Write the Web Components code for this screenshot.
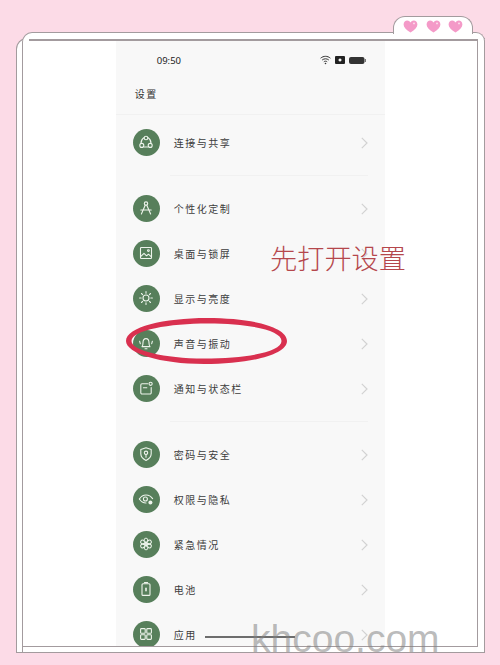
<!DOCTYPE html>
<html lang="zh">
<head>
<meta charset="utf-8">
<title>设置</title>
<style>
  html, body { margin: 0; height: 665px; overflow: hidden; background: #fcdbe7; }
</style>
</head>
<body>
<note-frame>
  <phone-screen>
    <status-bar time="09:50"></status-bar>
    <settings-header>设置</settings-header>
    <setting-row icon="share">连接与共享</setting-row>
    <row-divider></row-divider>
    <setting-row icon="compass">个性化定制</setting-row>
    <setting-row icon="picture">桌面与锁屏</setting-row>
    <setting-row icon="sun">显示与亮度</setting-row>
    <setting-row icon="bell">声音与振动</setting-row>
    <setting-row icon="notice">通知与状态栏</setting-row>
    <row-divider></row-divider>
    <setting-row icon="shield">密码与安全</setting-row>
    <setting-row icon="eye">权限与隐私</setting-row>
    <setting-row icon="flower">紧急情况</setting-row>
    <setting-row icon="battery">电池</setting-row>
    <setting-row icon="grid">应用</setting-row>
  </phone-screen>
</note-frame>
<script>
'use strict';

const petals = [0, 60, 120, 180, 240, 300]
  .map((deg) => `<ellipse cx="9" cy="5.6" rx="2" ry="2.5" transform="rotate(${deg} 9 9)"/>`)
  .join('');

const ICONS = {
  share: '<circle cx="9" cy="5" r="1.8"/><circle cx="4.8" cy="12.4" r="2"/><circle cx="13.2" cy="12.4" r="2"/><path d="M6.8 4.800C5 6 4 8 4 10.200M11.200 4.800C13 6 14 8 14 10.200M7.400 14h3.200"/>',
  compass: '<circle cx="9" cy="4.600" r="1.700"/><path d="M8.200 6.200 4.400 15M9.800 6.200 13.600 15M3.800 11h10.400"/>',
  picture: '<rect x="3.500" y="3.500" width="11" height="11" rx=".8"/><path d="m3.800 12.400 3.200-3 2.600 2.400 1.800-1.600 2.800 2.400"/><circle cx="11.400" cy="6.600" r=".9"/>',
  sun: '<circle cx="9" cy="9" r="3"/><path d="M9 2.600v1.600M9 13.800v1.600M2.600 9h1.600M13.800 9h1.600M4.500 4.500l1.100 1.100M12.400 12.400l1.100 1.100M4.500 13.500l1.100-1.100M12.400 5.600l1.100-1.100"/>',
  bell: '<path d="M5 12.600c1-.9 1-2 1-3.800C6 6.600 7.200 4.600 9 4.600s3 2 3 4.200c0 1.800 0 2.900 1 3.800zM8 14.800h2"/><path d="M2.600 7.200l.7 2.400M15.400 7.200l-.7 2.400"/>',
  notice: '<path d="M10.600 4.800H5A1.200 1.200 0 0 0 3.800 6v7.800A1.200 1.200 0 0 0 5 15h8a1.200 1.200 0 0 0 1.200-1.200V8.600"/><path d="M6.400 8.800h3.400"/><circle cx="13.600" cy="4.800" r="1.600"/>',
  shield: '<path d="M9 2.800 14.200 4.600v4.200c0 3-2.200 5.200-5.200 6.600-3-1.400-5.200-3.600-5.200-6.600V4.600z"/><circle cx="9" cy="7.800" r="1.700"/><path d="M9 9.500v2.800"/>',
  eye: '<path d="M2.400 9C4 6.400 6.300 5 9 5c2.700 0 5 1.300 6.600 3.600"/><path d="M2.400 9c1.600 2.600 3.900 4 6.600 4"/><circle cx="8.400" cy="9" r="2"/><circle cx="13.400" cy="12.400" r="2" fill="#eef4ec" stroke="none"/>',
  flower: `<g stroke-width=".95">${petals}</g><circle cx="9" cy="9" r="1.300"/>`,
  battery: '<rect x="5" y="3.800" width="8" height="11.600" rx="1"/><path d="M7.400 2.600h3.200"/><path d="M9 8.400v2.400" stroke-width="1.600"/>',
  grid: '<rect x="3.600" y="3.600" width="4.600" height="4.600" rx=".8"/><rect x="9.800" y="3.600" width="4.600" height="4.600" rx=".8"/><rect x="3.600" y="9.800" width="4.600" height="4.600" rx=".8"/><rect x="9.800" y="9.800" width="4.600" height="4.600" rx=".8"/>',
};

const CJK = '"Noto Sans CJK SC", "Noto Sans", sans-serif';

customElements.define(
  'note-frame',
  class NoteFrame extends HTMLElement {
    constructor() {
      super();
      this.attachShadow({ mode: 'open' }).innerHTML = `
      <style>
      :host {
        display: block;
        box-sizing: border-box;
        position: relative;
        height: 665px;
        padding: 38px 15px 12px 16px;
        --line: #a39b9e;
      }
      .back {
        box-sizing: border-box;
        height: 100%;
        background: #fff;
        border: 1.500px solid var(--line);
        border-right: 0;
        border-top-left-radius: 11px;
        padding-left: 4.500px;
        display: flex;
        flex-direction: column;
      }
      .front {
        flex: 1;
        min-height: 0;
        margin-top: -7.500px;
        background: #fff;
        border: 1.500px solid var(--line);
        border-bottom: 0;
        border-radius: 10px 9px 0 0;
        padding: 6.500px 6px 5px 0;
        display: flex;
        flex-direction: column;
      }
      .rule {
        flex: none;
        height: 2px;
        margin-left: 6px;
        background: var(--line);
      }
      .inner {
        flex: 1;
        min-height: 0;
        display: flex;
        justify-content: center;
        border-right: 1.500px solid var(--line);
        border-bottom: 1.500px solid var(--line);
        padding-left: 1px;
        overflow: hidden;
      }
      .tab {
        position: absolute;
        left: 393px;
        top: 16px;
        width: 80px;
        height: 17.500px;
        box-sizing: border-box;
        background: #fff;
        border: 1.500px solid var(--line);
        border-bottom: 0;
        border-radius: 12px 12px 0 0;
        display: flex;
        justify-content: space-between;
        padding: 3px 9px 0 9px;
      }
      .tab svg { width: 15px; height: 13px; }
      .hint {
        position: absolute;
        left: 270px;
        top: 237px;
        font: 300 27.200px/40px ${CJK};
        color: #b5474c;
      }
      .ring {
        position: absolute;
        left: 124px;
        top: 315px;
      }
      .mark {
        position: absolute;
        left: 251px;
        top: 613.500px;
        font: 39px/50px "Liberation Sans", sans-serif;
        color: rgba(130, 130, 130, .55);
      }
      </style>
      <div class="back">
        <div class="front">
          <div class="rule"></div>
          <div class="inner"><slot></slot></div>
        </div>
      </div>
      <div class="tab">
        ${'<svg viewBox="0 0 15 13"><path fill="#f49ac8" d="M7.500 12.600C3 9.600.6 7.400.6 4.400.6 2 2.400.6 4.200.6c1.400 0 2.600.7 3.300 2 .7-1.300 1.900-2 3.300-2 1.800 0 3.600 1.400 3.600 3.800 0 3-2.400 5.200-6.900 8.200z"/><circle cx="11" cy="3.400" r=".9" fill="#fde3ef"/></svg>'.repeat(3)}
      </div>
      <div class="hint">先打开设置</div>
      <svg class="ring" width="166" height="52" viewBox="0 0 166 52">
        <path fill="#d9304f" fill-rule="evenodd" d="M83 3C128 3 163 12 163 26 163 40 125 49 80 49 36 49 2 38 2 26 2 12 40 3 83 3ZM84 8.500C45 8.500 8 15 7.500 26 7.500 35.500 40 43.500 80 43.500 122 43.500 157.500 37 157.500 26 157.500 15 124 8.500 84 8.500Z"/>
      </svg>
      <div class="mark">khcoo.com</div>
      `;
    }
  }
);

customElements.define(
  'phone-screen',
  class PhoneScreen extends HTMLElement {
    constructor() {
      super();
      this.attachShadow({ mode: 'open' }).innerHTML = `
      <style>
      :host {
        display: block;
        position: relative;
        width: 269px;
        height: 100%;
        background: #f8f8f8;
        overflow: hidden;
      }
      .home {
        position: absolute;
        left: 89px;
        bottom: 8px;
        width: 90px;
        height: 2px;
        background: #6d6d6d;
      }
      </style>
      <slot></slot>
      <div class="home"></div>
      `;
    }
  }
);

customElements.define(
  'status-bar',
  class StatusBar extends HTMLElement {
    constructor() {
      super();
      this.attachShadow({ mode: 'open' }).innerHTML = `
      <style>
      :host {
        display: flex;
        align-items: center;
        justify-content: space-between;
        height: 38px;
        padding: 0 19px 0 41px;
        font: 9.500px "Noto Sans", sans-serif;
        color: #222;
      }
      .icons { display: flex; align-items: center; gap: 4px; }
      </style>
      <span class="time"></span>
      <span class="icons">
        <svg width="11" height="10" viewBox="0 0 11 10" fill="none" stroke="#333" stroke-width="1">
          <path d="M.6 3.200C3.500.7 7.500.7 10.400 3.200M2.200 5C4.200 3.400 6.800 3.400 8.800 5M3.800 6.800C4.800 6 6.200 6 7.200 6.800"/>
          <circle cx="5.500" cy="8.500" r=".8" fill="#333" stroke="none"/>
        </svg>
        <svg width="10" height="8" viewBox="0 0 10 8"><path fill="#222" fill-rule="evenodd" d="M1 0h8a1 1 0 0 1 1 1v6a1 1 0 0 1-1 1H1a1 1 0 0 1-1-1V1a1 1 0 0 1 1-1ZM5 2.500a1.500 1.500 0 1 0 .01 0Z"/></svg>
        <svg width="17" height="7" viewBox="0 0 17 7"><rect width="15.500" height="7" rx="2" fill="#333"/><rect x="15.800" y="2" width="1.200" height="3" fill="#777"/></svg>
      </span>
      `;
      this.shadowRoot.querySelector('.time').textContent = this.getAttribute('time');
    }
  }
);

customElements.define(
  'settings-header',
  class SettingsHeader extends HTMLElement {
    constructor() {
      super();
      this.attachShadow({ mode: 'open' }).innerHTML = `
      <style>
      :host {
        display: block;
        height: 34.500px;
        padding-left: 19px;
        border-bottom: 1px solid #f1f1f1;
        margin-bottom: 5px;
        font: 10px/30px ${CJK};
        letter-spacing: 1.500px;
        color: #333;
      }
      </style>
      <slot></slot>
      `;
    }
  }
);

customElements.define(
  'setting-row',
  class SettingRow extends HTMLElement {
    constructor() {
      super();
      this.attachShadow({ mode: 'open' }).innerHTML = `
      <style>
      :host {
        display: flex;
        align-items: center;
        height: 45px;
        padding: 0 17px;
        font: 10px ${CJK};
        letter-spacing: 1.500px;
        color: #3c3c3c;
      }
      .badge {
        flex: none;
        width: 27px;
        height: 27px;
        border-radius: 50%;
        background: #577f5b;
        display: flex;
        align-items: center;
        justify-content: center;
        margin-right: 14px;
      }
      .badge svg {
        width: 18px;
        height: 18px;
        fill: none;
        stroke: #eef4ec;
        stroke-width: 1.100;
        stroke-linecap: round;
        stroke-linejoin: round;
      }
      .label { flex: 1; }
      .chevron { width: 7px; height: 12px; margin-top: 2px; fill: none; stroke: #d2d2d2; stroke-width: 1.200; }
      </style>
      <span class="badge"><svg viewBox="0 0 18 18"></svg></span>
      <span class="label"><slot></slot></span>
      <svg class="chevron" viewBox="0 0 7 12"><path d="M.8.8 6 6 .8 11.200"/></svg>
      `;
      this.shadowRoot.querySelector('.badge svg').innerHTML = ICONS[this.getAttribute('icon')] || '';
    }
  }
);

customElements.define(
  'row-divider',
  class RowDivider extends HTMLElement {
    constructor() {
      super();
      this.attachShadow({ mode: 'open' }).innerHTML = `
      <style>
      :host {
        display: block;
        height: 1px;
        margin: 10px 17px 10px 54px;
        background: #f1f1f1;
      }
      </style>
      `;
    }
  }
);
</script>
</body>
</html>
